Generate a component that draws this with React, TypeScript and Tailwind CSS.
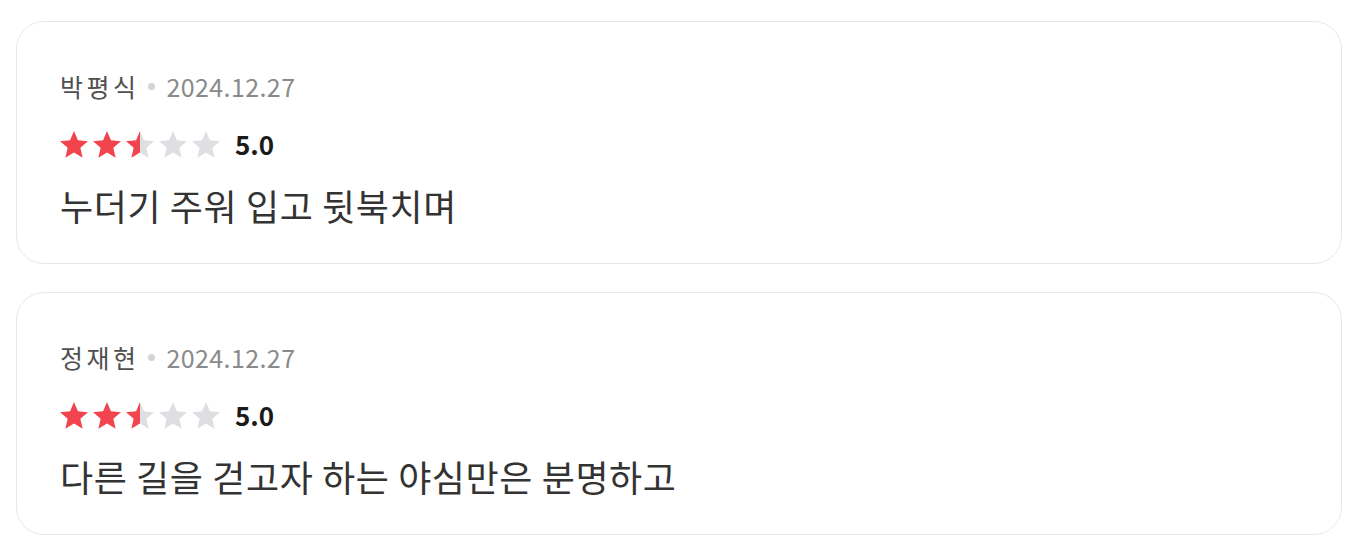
import React from "react";

const reviews = [
  { name: "박평식", date: "2024.12.27", rating: 2.5, score: "5.0", text: "누더기 주워 입고 뒷북치며" },
  { name: "정재현", date: "2024.12.27", rating: 2.5, score: "5.0", text: "다른 길을 걷고자 하는 야심만은 분명하고" },
];

const STAR_PATH =
  "M12 17.27L18.18 21l-1.64-7.03L22 9.24l-7.19-.61L12 2 9.19 8.63 2 9.24l5.46 4.73L5.82 21z";

function Star({ fill, id }: { fill: number; id: string }) {
  return (
    <svg viewBox="2 2 20 19.2" className="h-[27px] w-[28px]">
      <defs>
        <linearGradient id={id} x1="0" x2="1" y1="0" y2="0">
          <stop offset={fill} stopColor="#f2444f" />
          <stop offset={fill} stopColor="#dedfe2" />
        </linearGradient>
      </defs>
      <path d={STAR_PATH} fill={`url(#${id})`} />
    </svg>
  );
}

function Stars({ rating, prefix }: { rating: number; prefix: string }) {
  return (
    <div className="flex items-center gap-[5px]">
      {[0, 1, 2, 3, 4].map((i) => {
        const fill = Math.max(0, Math.min(1, rating - i));
        return <Star key={i} fill={fill} id={`${prefix}-${i}`} />;
      })}
    </div>
  );
}

export default function App() {
  return (
    <main
      className="min-h-screen bg-white pl-4 pr-5 pt-[21px]"
      style={{ fontFamily: '"Noto Sans CJK KR", "Noto Sans", sans-serif' }}
    >
      <div className="flex flex-col gap-[28px]">
        {reviews.map((r, idx) => (
          <section
            key={idx}
            className="flex h-[243px] flex-col rounded-[28px] border border-[#e5e7eb] bg-white px-[43px] pt-[48px]"
          >
            <div className="flex h-[32px] items-center text-[25px] leading-[32px]">
              <span className="tracking-[3.5px] text-[#505050]">{r.name}</span>
              <span className="ml-[8px] mr-[12px] h-[7px] w-[7px] rounded-full bg-[#d4d4d4]" />
              <span className="tracking-[0.4px] text-[#8a8a8a]">{r.date}</span>
            </div>
            <div className="mt-[26px] flex h-[32px] items-center gap-[15px]">
              <Stars rating={r.rating} prefix={`s${idx}`} />
              <span className="text-[26px] font-bold leading-[32px] text-[#1a1a1a]">{r.score}</span>
            </div>
            <p className="mt-[23px] text-[36px] leading-[44px] tracking-[0.6px] text-[#333333]">{r.text}</p>
          </section>
        ))}
      </div>
    </main>
  );
}
